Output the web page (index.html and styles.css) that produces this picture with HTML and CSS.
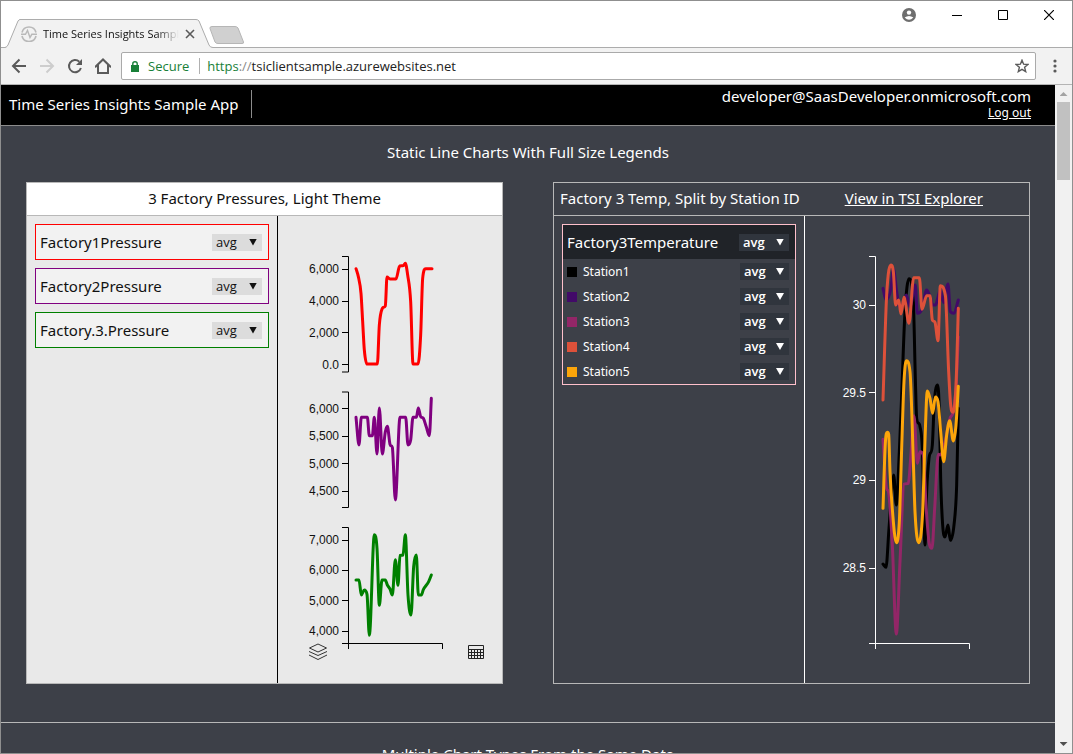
FILE: index.html
```html
<!DOCTYPE html>
<html lang="en">
<head>
<meta charset="utf-8">
<title>Time Series Insights Sample App</title>
<link rel="stylesheet" href="styles.css">
</head>
<body>
<div class="window">
  <div class="tabstrip">
    <div class="tab">
      <svg class="tab-shape" width="208" height="29" viewBox="0 0 208 29" aria-hidden="true"><path d="M0 28.5H1Q2 28 3 26L13 2Q14 .5 15 .5H191Q193 .5 194 2L204 26Q205 28.5 208 28.5V29H0Z" fill="#f2f2f2"/><path d="M0 28.5Q2 28 3 26L13 2Q14 .5 15 .5H191Q193 .5 194 2L204 26Q205 28.5 208 28.5" fill="none" stroke="#acacac"/></svg>
      <svg class="favicon" width="16" height="16" viewBox="0 0 16 16" fill="none" stroke="#b9b9b9" stroke-width="1.6" aria-hidden="true"><path d="M1 6.5A7.2 7.2 0 0 1 15 6.5M15 10A7.2 7.2 0 0 1 1 10"/><path d="M0 8.3H4.5L6.5 4.5L9 11.5L10.8 8.3H16" stroke-width="1.4"/></svg>
      <span class="tab-title">Time Series Insights Sample App</span>
      <button class="plain" aria-label="Close tab"><svg width="10" height="10" viewBox="0 0 10 10" stroke="#5a5a5a" stroke-width="1.6"><path d="M1 1L9 9M9 1L1 9"/></svg></button>
    </div>
    <button class="plain new-tab" aria-label="New tab"><svg width="36" height="19" viewBox="0 0 36 19"><path d="M3 .5H26Q28 .5 29 2L34.5 16Q35 17.500 33 17.500H9Q7 17.500 6 16L1 2.500Q.5 .5 3 .5Z" fill="#d0d0d0" stroke="#b6b6b6"/></svg></button>
    <div class="window-controls">
      <button class="plain" aria-label="Profile"><svg width="14" height="14" viewBox="0 0 14 14"><circle cx="7" cy="7" r="7" fill="#6e6e6e"/><circle cx="7" cy="4.600" r="2.200" fill="#fff"/><path d="M2.600 9.600Q7 6.400 11.400 9.600Q7 14 2.600 9.600Z" fill="#fff"/></svg></button>
      <button class="plain" aria-label="Minimize"><svg width="10" height="10" viewBox="0 0 10 10" stroke="#000"><path d="M0 5.500H10"/></svg></button>
      <button class="plain" aria-label="Maximize"><svg width="10" height="10" viewBox="0 0 10 10" fill="none" stroke="#000"><path d="M.5 .5H9.500V9.500H.5Z"/></svg></button>
      <button class="plain" aria-label="Close"><svg width="10" height="10" viewBox="0 0 10 10" stroke="#000" stroke-width="1.200"><path d="M0 0L10 10M10 0L0 10"/></svg></button>
    </div>
  </div>
  <div class="toolbar">
    <button class="plain" aria-label="Back"><svg width="16" height="16" viewBox="0 0 16 16" fill="none" stroke="#5a5a5a" stroke-width="2"><path d="M15 8H2.500M8.500 1.500L2 8L8.500 14.500"/></svg></button>
    <button class="plain" aria-label="Forward"><svg width="16" height="16" viewBox="0 0 16 16" fill="none" stroke="#cdcdcd" stroke-width="2"><path d="M1 8H13.500M7.500 1.500L14 8L7.500 14.500"/></svg></button>
    <button class="plain" aria-label="Reload"><svg width="16" height="16" viewBox="0 0 16 16"><path d="M13.900 10A6.100 6.100 0 1 1 12.300 3.700" fill="none" stroke="#5a5a5a" stroke-width="2"/><path d="M15 1V7H9Z" fill="#5a5a5a"/></svg></button>
    <button class="plain" aria-label="Home"><svg width="16" height="16" viewBox="0 0 16 16" fill="none" stroke="#5a5a5a" stroke-width="2"><path d="M0 9.200L8 1.500L16 9.200M3 7V15H13V7"/></svg></button>
    <div class="address">
      <svg width="8" height="11" viewBox="0 0 8 11" aria-hidden="true"><path d="M0 4H8V11H0Z" fill="#188038"/><path d="M1.800 4.500V2.800A2.200 2 0 0 1 6.200 2.800V4.500" fill="none" stroke="#188038" stroke-width="1.400"/></svg>
      <span class="secure">Secure</span>
      <span class="url"><span class="scheme">https</span><span class="slashes">://</span>tsiclientsample.azurewebsites.net</span>
      <button class="plain" aria-label="Bookmark this page"><svg width="14" height="14" viewBox="0 0 14 14" fill="none" stroke="#5a5a5a" stroke-width="1.400"><path d="M7 1.200L8.600 5.200L13 5.500L9.600 8.300L10.700 12.600L7 10.300L3.300 12.600L4.400 8.300L1 5.500L5.400 5.200Z"/></svg></button>
    </div>
    <button class="plain menu" aria-label="Menu"><svg width="4" height="14" viewBox="0 0 4 14" fill="#5a5a5a"><circle cx="2" cy="2" r="1.600"/><circle cx="2" cy="7" r="1.600"/><circle cx="2" cy="12" r="1.600"/></svg></button>
  </div>
  <div class="viewport">
    <div class="page">
      <header class="app-header">
        <h1>Time Series Insights Sample App</h1>
        <div class="account"><span>developer@SaasDeveloper.onmicrosoft.com</span><a href="#logout">Log out</a></div>
      </header>
      <section class="section">
        <h2>Static Line Charts With Full Size Legends</h2>
        <div class="panels">
          <article class="panel light">
            <div class="panel-head"><h3>3 Factory Pressures, Light Theme</h3></div>
            <div class="panel-body">
              <div class="legend">
                <div class="series red"><label for="p1">Factory1Pressure</label><span class="pick"><select id="p1"><option>avg</option></select></span></div>
                <div class="series purple"><label for="p2">Factory2Pressure</label><span class="pick"><select id="p2"><option>avg</option></select></span></div>
                <div class="series green"><label for="p3">Factory.3.Pressure</label><span class="pick"><select id="p3"><option>avg</option></select></span></div>
              </div>
              <div class="chart">
                <svg id="pressure" width="224" height="467" viewBox="278 216 224 467" role="img" aria-label="Factory pressures">
                  <g class="axis">
                    <path d="M342 256.500H348.500V372H342M342 269.500H348M342 301.500H348M342 332.500H348M342 364.500H348"/>
                    <path d="M342 392H348.500V507.500H342M342 408.500H348M342 436.500H348M342 463.500H348M342 491.500H348"/>
                    <path d="M342 527.500H348.500V649M342 540.500H348M342 570.500H348M342 600.500H348M342 631.500H348M342 643.500H442.500V649"/>
                    <text x="339" y="273">6,000</text><text x="339" y="305">4,000</text><text x="339" y="337">2,000</text><text x="339" y="369">0.0</text>
                    <text x="339" y="413">6,000</text><text x="339" y="440">5,500</text><text x="339" y="468">5,000</text><text x="339" y="495">4,500</text>
                    <text x="339" y="544">7,000</text><text x="339" y="574">6,000</text><text x="339" y="605">5,000</text><text x="339" y="635">4,000</text>
                  </g>
                </svg>
                <div class="chart-tools">
                  <button class="plain" aria-label="Stack series"><svg width="20" height="18" viewBox="0 0 20 18" fill="none" stroke="#333"><path d="M10 1L18.500 5L10 9L1.500 5Z"/><path d="M1 8.500L10 12.500L19 8.500M1 12L10 16.500L19 12"/></svg></button>
                  <button class="plain" aria-label="Show grid"><svg width="18" height="15" viewBox="0 0 18 15" fill="none" stroke="#222"><path d="M1.500 .5H16.500V13.500H1.500ZM1.500 4.500H16.500M1.500 7.500H16.500M1.500 10.500H16.500M4.500 4.500V13.500M7.500 4.500V13.500M10.500 4.500V13.500M13.500 4.500V13.500"/></svg></button>
                </div>
              </div>
            </div>
          </article>
          <article class="panel dark">
            <div class="panel-head"><h3>Factory 3 Temp, Split by Station ID</h3><a href="#explorer">View in TSI Explorer</a></div>
            <div class="panel-body">
              <div class="legend">
                <div class="group">
                  <div class="group-head"><label for="t0">Factory3Temperature</label><span class="pick"><select id="t0"><option>avg</option></select></span></div>
                  <div class="station"><i class="swatch s1"></i><label for="t1">Station1</label><span class="pick"><select id="t1"><option>avg</option></select></span></div>
                  <div class="station"><i class="swatch s2"></i><label for="t2">Station2</label><span class="pick"><select id="t2"><option>avg</option></select></span></div>
                  <div class="station"><i class="swatch s3"></i><label for="t3">Station3</label><span class="pick"><select id="t3"><option>avg</option></select></span></div>
                  <div class="station"><i class="swatch s4"></i><label for="t4">Station4</label><span class="pick"><select id="t4"><option>avg</option></select></span></div>
                  <div class="station"><i class="swatch s5"></i><label for="t5">Station5</label><span class="pick"><select id="t5"><option>avg</option></select></span></div>
                </div>
              </div>
              <div class="chart">
                <svg id="temperature" width="224" height="467" viewBox="805 216 224 467" role="img" aria-label="Factory 3 temperature by station">
                  <g class="axis">
                    <path d="M869 256.500H875.500V649M869 305.500H875M869 392.500H875M869 480.500H875M869 568.500H875M869 643.500H969.500V649"/>
                    <text x="866" y="309">30</text><text x="866" y="397">29.5</text><text x="866" y="484">29</text><text x="866" y="572">28.5</text>
                  </g>
                </svg>
              </div>
            </div>
          </article>
        </div>
      </section>
      <section class="section next">
        <h2>Multiple Chart Types From the Same Data</h2>
      </section>
    </div>
    <div class="scrollbar" aria-hidden="true"><i class="arrow up"></i><i class="thumb"></i><i class="arrow down"></i></div>
  </div>
</div>
<script src="charts.js"></script>
</body>
</html>
```
FILE: styles.css
```css
* { box-sizing: border-box; }
body { margin: 0; font-family: "Noto Sans", "Open Sans", sans-serif; font-size: 15px; line-height: 20px; color: #fff; }
h1, h2, h3 { margin: 0; font-size: 15px; font-weight: 400; line-height: 20px; }
a { color: inherit; }
svg { display: block; }
.plain { display: block; padding: 0; border: 0; background: none; }

.window { display: flex; flex-direction: column; height: 100vh; border: 1px solid #8f8f8f; background: #fff; overflow: hidden; }

.tabstrip { display: flex; align-items: flex-end; flex: none; height: 47px; padding-left: 4px; border-bottom: 1px solid #acacac; }
.tab { position: relative; display: flex; align-items: center; width: 208px; height: 29px; margin-bottom: -1px; padding-left: 16px; }
.tab-shape { position: absolute; inset: 0; }
.favicon, .tab .plain { position: relative; }
.tab-title { position: relative; width: 136px; margin: 0 6px; overflow: hidden; white-space: nowrap; font-family: "Open Sans", sans-serif; font-size: 11px; color: #111; -webkit-mask-image: linear-gradient(to right, #000 114px, transparent 136px); mask-image: linear-gradient(to right, #000 114px, transparent 136px); }
.new-tab { margin: 0 0 2px -4px; }
.window-controls { display: flex; align-items: center; align-self: flex-start; gap: 36px; height: 28px; margin-left: auto; padding-right: 18px; }

.toolbar { display: flex; align-items: center; gap: 12px; flex: none; height: 37px; padding: 0 15px 0 10px; border-bottom: 1px solid #b4b4b4; background: #f2f2f2; }
.address { display: flex; align-items: center; flex: 1; height: 28px; margin-left: -2px; padding: 0 6px 0 9px; border: 1px solid #aaa; border-radius: 2px; background: #fff; font-family: "Open Sans", sans-serif; font-size: 13px; color: #222; }
.secure { margin-left: 9px; padding-right: 10px; border-right: 1px solid #b0b0b0; line-height: 16px; color: #188038; }
.url { flex: 1; padding-left: 7px; }
.scheme { color: #188038; }
.slashes { color: #888; }
.menu { margin-left: 5px; }

.viewport { display: flex; flex: 1; min-height: 0; }
.page { flex: 1; min-width: 0; overflow: hidden; background: #3d4048; }
.scrollbar { display: flex; flex-direction: column; align-items: center; flex: none; width: 17px; background: #f1f1f1; }
.arrow { width: 8px; height: 4px; background: #505050; }
.up { margin: 7px 0 6px; background: #a3a3a3; clip-path: polygon(0 100%, 50% 0, 100% 100%); }
.down { margin: auto 0 7px; clip-path: polygon(0 0, 100% 0, 50% 100%); }
.thumb { width: 13px; height: 78px; background: #c1c1c1; }

.app-header { display: flex; align-items: center; justify-content: space-between; height: 41px; padding: 0 24px 2px 8px; border-bottom: 1px solid #8c8c8c; background: #000; }
.app-header h1 { padding: 4px 13px 4px 0; border-right: 1px solid #8c8c8c; }
.account { display: flex; flex-direction: column; align-items: flex-end; line-height: 18px; }
.account a { font-size: 12px; line-height: 16px; }

.section { padding: 15px 0 38px; border-bottom: 1px solid #b8b8b8; }
.section.next { padding-top: 20px; }
.section h2 { text-align: center; line-height: 22px; }
.panels { display: grid; grid-template-columns: 1fr 1fr; gap: 50px; margin-top: 19px; padding: 0 25px; }
.panel { border: 1px solid #b8b8b8; }
.panel-head { display: flex; align-items: center; height: 33px; padding-bottom: 2px; border-bottom: 1px solid #b8b8b8; }
.panel-body { display: flex; }
.legend { flex: 1; min-width: 0; padding: 8px; border-right: 1px solid #fff; }
.chart { position: relative; flex: none; }

.light { background: #e9e9e9; color: #111; }
.light .panel-head { justify-content: center; background: #fff; }
.light .legend { border-color: #000; }
.dark .panel-head { padding-left: 6px; gap: 45px; }

.series { display: flex; align-items: center; justify-content: space-between; height: 36px; margin-bottom: 8px; padding: 0 6px 0 4px; border: 1px solid; background: #f2f2f2; }
.red { border-color: #f00; }
.purple { border-color: #800080; }
.green { border-color: #008000; }

.pick { position: relative; display: block; width: 50px; height: 17px; }
.pick::after { content: ""; position: absolute; top: 5px; right: 5px; width: 8px; height: 7px; background: currentColor; clip-path: polygon(0 0, 100% 0, 50% 100%); pointer-events: none; }
.pick select { display: block; appearance: none; width: 100%; height: 100%; margin: 0; padding: 0 4px; border: 0; border-radius: 0; background: #dcdcdc; color: inherit; font: 13px/17px "Open Sans", sans-serif; }
.dark .pick select { background: #30353d; font-weight: 600; }

.group { border: 1px solid #ffc0cb; }
.group-head { display: flex; align-items: center; justify-content: space-between; height: 34px; padding: 0 6px 0 4px; background: #202328; }
.station { display: flex; align-items: center; height: 25px; padding: 0 6px 0 4px; font-size: 12px; }
.station label { flex: 1; padding-left: 6px; }
.station .pick { width: 49px; }
.swatch { width: 10px; height: 10px; }
.s1 { background: #000; }
.s2 { background: #420a68; }
.s3 { background: #932667; }
.s4 { background: #dd513a; }
.s5 { background: #fca50a; }

.axis path { fill: none; stroke: #000; }
.axis text { font: 12px "Liberation Sans", Arial, sans-serif; text-anchor: end; fill: #111; }
.dark .axis path { stroke: #fff; }
.dark .axis text { fill: #fff; }
.line { fill: none; stroke-width: 3; stroke-linecap: round; stroke-linejoin: round; }
.chart-tools { position: absolute; left: 30px; right: 17px; bottom: 22px; display: flex; justify-content: space-between; }
```
FILE: charts.js
```js
// Plot points are stored in thirds of a pixel from each plot's origin.
const UNIT = 3;

// Monotone cubic path through the points.
function monotone(p) {
  const n = p.length, s = [], m = [];
  for (let i = 0; i < n - 1; i++) s.push((p[i + 1][1] - p[i][1]) / (p[i + 1][0] - p[i][0]));
  m[0] = s[0];
  m[n - 1] = s[n - 2];
  for (let i = 1; i < n - 1; i++) {
    if (s[i - 1] * s[i] <= 0) { m[i] = 0; continue; }
    const t = (s[i - 1] + s[i]) / 2;
    m[i] = Math.sign(t) * Math.min(Math.abs(t), 3 * Math.abs(s[i - 1]), 3 * Math.abs(s[i]));
  }
  let d = `M${p[0]}`;
  for (let i = 0; i < n - 1; i++) {
    const h = (p[i + 1][0] - p[i][0]) / 3;
    d += `C${p[i][0] + h},${p[i][1] + m[i] * h} ${p[i + 1][0] - h},${p[i + 1][1] - m[i + 1] * h} ${p[i + 1]}`;
  }
  return d;
}

function plot(id, color, ox, oy, data) {
  const pts = data.trim().split(" ").map(q => {
    const [x, y] = q.split(",").map(Number);
    return [ox + x / UNIT, oy + y / UNIT];
  });
  const path = document.createElementNS("http://www.w3.org/2000/svg", "path");
  path.setAttribute("class", "line");
  path.setAttribute("stroke", color);
  path.setAttribute("d", monotone(pts));
  document.getElementById(id).append(path);
}

plot("pressure", "#f00", 300, 245, "168,71 175,95 183,145 188,230 193,315 201,357 217,357 232,357 238,240 247,190 256,183 261,96 270,102 288,102 299,63 310,62 316,55 323,90 332,170 339,357 347,357 354,357 362,270 368,100 377,71 396,71");
plot("pressure", "#800080", 300, 385, "168,97 177,180 184,97 202,97 208,152 217,152 223,97 231,207 238,69 247,207 256,140 262,124 270,178 277,187 286,345 300,97 317,97 324,180 332,165 339,97 349,97 355,69 362,95 370,100 379,126 388,152 394,40");
plot("pressure", "#008000", 300, 515, "168,195 177,195 184,240 193,225 201,238 208,361 223,59 231,100 238,271 246,195 256,195 262,210 270,222 277,240 286,134 294,211 300,121 309,120 316,59 324,240 333,300 341,155 349,120 355,240 364,240 370,224 386,200 394,180");

plot("temperature", "#000", 830, 245, "159,957 168,967 177,850 191,690 199,780 208,620 215,450 225,200 237,101 250,170 256,400 260,520 270,545 277,610 285,900 290,740 297,640 307,600 313,470 323,420 328,500 332,700 338,840 345,876 354,840 361,886 372,840 380,720 385,490");
plot("temperature", "#420a68", 830, 245, "159,130 168,165 183,130 190,72 200,140 206,178 213,190 229,150 240,185 256,120 262,205 275,195 290,135 300,155 308,180 317,180 323,160 331,135 341,173 354,117 361,200 372,205 385,165");
plot("temperature", "#932667", 830, 245, "159,583 168,720 177,750 187,900 199,1167 210,950 222,717 235,715 242,640 252,512 262,655 270,620 280,630 288,780 297,890 306,910 314,790 325,628 332,630 345,590 360,520 370,500 378,430 385,275");
plot("temperature", "#dd513a", 830, 245, "159,465 170,150 183,60 190,80 197,180 206,165 213,207 222,157 237,235 251,98 268,98 276,193 290,152 300,152 307,225 315,232 324,287 331,122 346,150 356,380 362,480 369,502 378,420 385,190");
plot("temperature", "#fca50a", 830, 245, "159,790 166,595 172,562 176,568 180,680 186,780 199,893 208,830 215,610 222,410 229,347 240,380 249,615 255,800 266,893 278,800 284,615 292,438 300,460 308,505 316,456 324,470 332,560 341,650 350,570 359,527 370,588 378,540 385,424");
```
